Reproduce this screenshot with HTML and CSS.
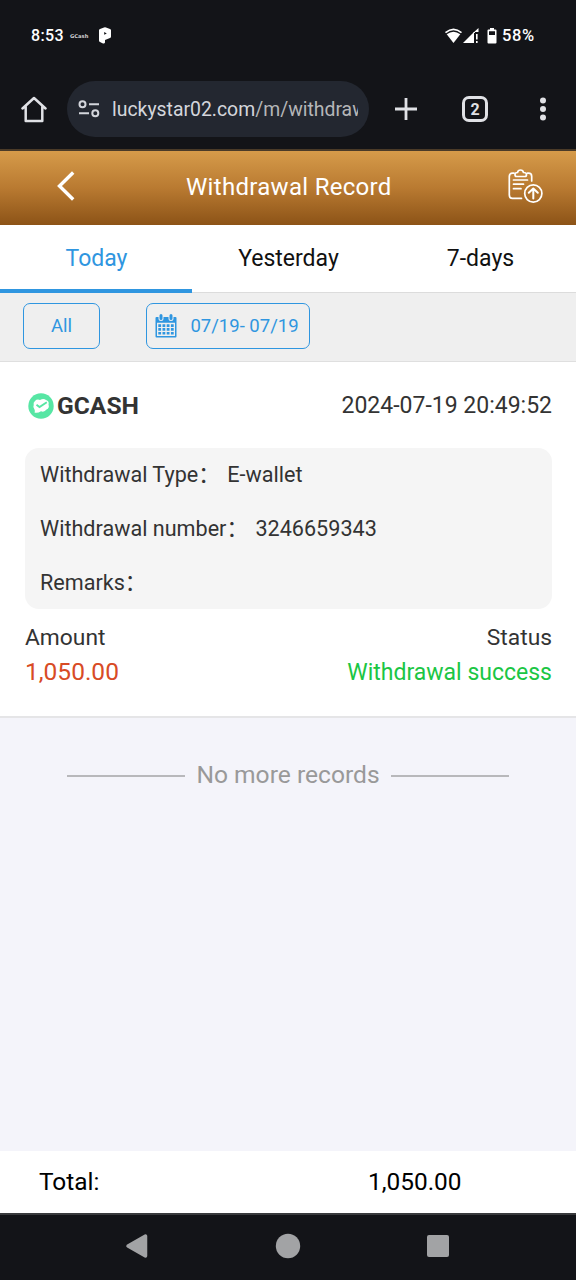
FILE: index.html
```html
<!DOCTYPE html>
<html lang="en">
<head>
<meta charset="utf-8">
<title>Withdrawal Record</title>
<link rel="stylesheet" href="styles.css">
</head>
<body>
<div class="phone">
  <div class="status-bar">
    <span class="clock">8:53</span>
    <span class="carrier">GCash</span>
    <svg class="app-icon" width="12" height="17" viewBox="0 0 12 17"><path fill="#fff" fill-rule="evenodd" d="M0 3.200Q0 2.500 1 2L5 .4Q6 0 7 .4L11 2Q12 2.500 12 3.200V9.500Q12 10.500 11 11L6 13V15.500Q5.500 17 4 16.400L1 15Q0 14.500 0 13.500ZM5.200 5V7.800L7.800 6.400Z"/></svg>
    <svg class="wifi" width="19" height="16" viewBox="0 0 19 16"><path d="M1.500 4.600Q9.500-2 17.500 4.600" fill="none" stroke="#fff" stroke-width="1.600"/><path d="M2.700 6.200Q9.500 1.200 16.300 6.200L9.500 15Z" fill="#fff"/></svg>
    <svg class="signal" width="16" height="16" viewBox="0 0 16 16"><path d="M0 15 11 4V15Z" fill="#fff"/><path d="M10 5 15.500 0V4H12V5Z" fill="#fff"/><path d="M13 6H14.600V11.500H13ZM13 13H14.600V15H13Z" fill="#fff"/></svg>
    <svg class="battery" width="10" height="16" viewBox="0 0 10 16"><path fill="#fff" fill-rule="evenodd" d="M3 0H7V1.500H8.500Q9.500 1.500 9.500 2.500V14.500Q9.500 15.500 8.500 15.500H1.500Q.5 15.500.5 14.500V2.500Q.5 1.500 1.500 1.500H3ZM2 3.200V7H8V3.200Z"/></svg>
    <span class="percent">58%</span>
  </div>

  <div class="browser-bar">
    <svg class="home" width="26" height="27" viewBox="0 0 26 27"><path d="M1.500 12.500 13 2 24.500 12.500M4.700 10.500V25H21.300V10.500" fill="none" stroke="#e0e1e5" stroke-width="2.500" stroke-linejoin="round" stroke-linecap="round"/></svg>
    <div class="omnibox">
      <svg width="22" height="18" viewBox="0 0 22 18" fill="none" stroke="#d4d6dc" stroke-width="2"><circle cx="4.500" cy="4.300" r="3"/><circle cx="17.300" cy="13.300" r="3"/><path d="M11 4.300H21M1 13.300H11"/></svg>
      <div class="url">luckystar02.com<span class="path">/m/withdraw</span></div>
    </div>
    <svg class="plus" width="24" height="24" viewBox="0 0 24 24"><path d="M12 1V23M1 12H23" stroke="#e0e1e5" stroke-width="2.800"/></svg>
    <div class="tab-count">2</div>
    <svg class="more" width="8" height="24" viewBox="0 0 8 24" fill="#e0e1e5"><circle cx="4" cy="3.600" r="3"/><circle cx="4" cy="12" r="3"/><circle cx="4" cy="20.400" r="3"/></svg>
  </div>

  <header class="header">
    <svg class="back" width="18" height="30" viewBox="0 0 18 30"><path d="M16.200 1.500 2.500 15 16.200 28.500" fill="none" stroke="#fff" stroke-width="3.400"/></svg>
    <h1 class="title">Withdrawal Record</h1>
    <svg class="clipboard" width="35" height="35" viewBox="0 0 35 35" fill="none" stroke="#fff" stroke-width="1.700" stroke-linecap="round" stroke-linejoin="round"><path d="M6 4.200H4.500Q1.300 4.200 1.300 7.500V26Q1.300 29.400 4.500 29.400H13.500M19.500 4.200H20.500Q23.700 4.200 23.700 7.500V12"/><path d="M7 5.500Q7 3.500 9.500 3.500Q10 1 12.500 1Q15 1 15.500 3.500Q18.500 3.500 18.500 5.500Q18.500 7.500 17 7.500H8.500Q7 7.500 7 5.500Z"/><path d="M5.500 11H19.500M5.500 15.200H15.500M5.500 19.700H13"/><circle cx="25.300" cy="24.500" r="8.600"/><path d="M25.300 29.500V19.700M20.800 23.700 25.300 19.500 29.800 23.700" stroke-width="2"/></svg>
  </header>

  <nav class="tabs">
    <div class="tab active">Today</div>
    <div class="tab">Yesterday</div>
    <div class="tab">7-days</div>
  </nav>

  <div class="filters">
    <div class="chip all">All</div>
    <div class="chip date">
      <svg width="22" height="24" viewBox="0 0 22 24"><path fill="#2f96e0" fill-rule="evenodd" d="M1.500 3H20.500Q21.500 3 21.500 4V22.500Q21.500 23.500 20.500 23.500H1.500Q.5 23.500.5 22.500V4Q.5 3 1.500 3ZM2 8.700V22H20V8.700Z"/><path d="M6 1.500V4.500M16 1.500V4.500" stroke="#efefef" stroke-width="5" stroke-linecap="round"/><path d="M6 1.500V4.500M16 1.500V4.500" stroke="#2f96e0" stroke-width="3" stroke-linecap="round"/><path d="M3.300 11.600H18.700M3.300 15.400H18.700M3.300 19.200H18.700" stroke="#2f96e0" stroke-width="2.600" stroke-dasharray="2.800 1.400"/></svg>
      <span>07/19- 07/19</span>
    </div>
  </div>

  <section class="record">
    <div class="record-head">
      <svg width="26" height="26" viewBox="0 0 26 26"><circle cx="13" cy="13" r="12.700" fill="#57e6a4"/><path fill="#fff" d="M7 8Q9 5.800 12 7Q15.500 4.800 18 7Q21.500 8 20.500 11.500Q21.800 15 18.500 16.500Q16.500 19.500 13 18.300Q9.500 20.500 6.500 19.500Q7.300 18 6.500 16.500Q4.500 14.500 5.700 12Q5 9.500 7 8Z"/><path d="M8.500 11.800 11.500 14 18.800 9.300" fill="none" stroke="#57e6a4" stroke-width="1.900"/></svg>
      <span class="wallet">GCASH</span>
      <span class="time">2024-07-19 20:49:52</span>
    </div>
    <div class="details">
      <div class="detail"><span class="label">Withdrawal Type</span><span class="colon">：</span><span class="value">E-wallet</span></div>
      <div class="detail"><span class="label">Withdrawal number</span><span class="colon">：</span><span class="value">3246659343</span></div>
      <div class="detail"><span class="label">Remarks</span><span class="colon">：</span></div>
    </div>
    <div class="summary">
      <div><div class="caption">Amount</div><div class="amount">1,050.00</div></div>
      <div class="right"><div class="caption">Status</div><div class="success">Withdrawal success</div></div>
    </div>
  </section>

  <main class="rest">
    <div class="end"><i class="rule"></i><span>No more records</span><i class="rule"></i></div>
  </main>

  <footer class="total"><span>Total:</span><span class="sum">1,050.00</span></footer>

  <div class="nav-bar">
    <svg width="24" height="26" viewBox="0 0 24 26"><path d="M3 13 20.500 3V23Z" fill="#a2a3a5" stroke="#a2a3a5" stroke-width="3.500" stroke-linejoin="round"/></svg>
    <svg class="home-dot" width="26" height="26" viewBox="0 0 26 26"><circle cx="13" cy="13" r="12.200" fill="#a2a3a5"/></svg>
    <svg width="22" height="22" viewBox="0 0 22 22"><rect width="22" height="22" rx="2" fill="#a2a3a5"/></svg>
  </div>
</div>
</body>
</html>
```
FILE: styles.css
```css
* { box-sizing: border-box; }
body { margin: 0; background: #f4f4fa; font-family: Roboto, "Noto Sans CJK SC", sans-serif; }
svg { display: block; flex: none; }
.phone { width: 576px; height: 1280px; display: flex; flex-direction: column; overflow: hidden; }

.status-bar { height: 71px; flex: none; background: #131418; color: #fff; display: flex; align-items: center; padding-left: 31px; font-size: 16px; font-weight: 500; }
.clock { width: 39px; letter-spacing: .4px; }
.carrier { width: 29px; font: bold 5.200px "DejaVu Sans", sans-serif; color: #d0d0d2; }
.app-icon { margin-right: 333px; }
.signal { margin-right: 8px; }
.battery { margin-right: 5px; }
.percent { font-size: 16.500px; letter-spacing: .6px; }

.browser-bar { height: 78px; flex: none; background: #131418; display: flex; align-items: center; padding: 0 0 2px 21px; }
.home { margin-right: 20px; }
.omnibox { width: 302px; height: 56px; border-radius: 28px; background: #232730; display: flex; align-items: center; padding: 0 11px; gap: 12px; margin: 0 25px 0 0; }
.url { width: 246px; overflow: hidden; white-space: nowrap; font-size: 19.400px; line-height: 30px; padding-top: 2px; color: #d4d6dc; }
.url .path { color: #b5b6b8; }
.plus { margin-right: 44px; }
.tab-count { width: 26px; height: 26px; border: 3px solid #e0e1e5; border-radius: 7px; display: flex; align-items: center; justify-content: center; color: #e0e1e5; font-size: 16px; font-weight: 700; margin-right: 51px; }

.header { height: 76px; flex: none; border-top: 2px solid #4b3b28; background: linear-gradient(#d69b4a, #b97a31 50%, #8c5317); display: flex; align-items: center; padding: 0 33px 4px 57px; color: #fff; }
.title { flex: 1; margin: 0; padding: 1px 0 0 111px; font-size: 24px; font-weight: 400; letter-spacing: .3px; }

.tabs { height: 68px; flex: none; background: #fff; display: flex; border-bottom: 1px solid #dcdcdc; }
.tab { width: 192px; height: 68px; line-height: 68px; text-align: center; font-size: 23px; padding-left: 1px; color: #111; }
.tab.active { color: #2f96e0; border-bottom: 4px solid #2f96e0; }

.filters { height: 69px; flex: none; background: #efefef; border-bottom: 1px solid #dfdfdf; display: flex; align-items: center; padding: 0 0 2px 23px; gap: 46px; color: #2f96e0; }
.chip { height: 46px; border: 1px solid #2f96e0; border-radius: 7px; display: flex; align-items: center; justify-content: center; font-size: 18.500px; }
.all { width: 77px; }
.date { width: 164px; gap: 13px; padding-right: 2px; }

.record { height: 356px; flex: none; background: #fff; border-bottom: 2px solid #e5e5e7; padding: 27px 24px 0 25px; color: #333; }
.record-head { height: 34px; display: flex; align-items: center; padding: 0 0 1px 3px; }
.wallet { font-weight: 700; font-size: 24.600px; margin-left: 3px; }
.time { margin-left: auto; font-size: 23px; }
.details { height: 161px; margin-top: 25px; border-radius: 14px; background: #f5f5f5; padding-left: 15px; }
.detail { height: 54px; display: flex; align-items: center; font-size: 21.600px; line-height: 30px; }
.colon { width: 20px; }
.value { margin-left: 9px; }
.summary { display: flex; justify-content: space-between; padding-top: 12px; font-size: 23px; line-height: 34px; }
.caption { font-size: 22.800px; }
.right { text-align: right; }
.amount { color: #d84b25; font-size: 24.500px; }
.success { color: #1bc644; padding-top: 1px; }

.rest { flex: 1; padding-top: 40px; }
.end { display: flex; justify-content: center; align-items: center; gap: 11px; color: #999; font-size: 24.600px; line-height: 34px; }
.rule { width: 118px; height: 2px; margin-top: 1px; background: #b8b8bb; }

.total { height: 62px; flex: none; background: #fff; display: flex; align-items: center; padding: 0 0 2px 39px; color: #000; font-size: 24.400px; }
.total span:first-child { width: 329px; }
.nav-bar { height: 67px; flex: none; background: #131418; border-top: 2px solid #393a3d; display: flex; align-items: center; justify-content: space-between; padding: 0 127px 3px 125px; }
.home-dot { margin-right: 1px; }
```
